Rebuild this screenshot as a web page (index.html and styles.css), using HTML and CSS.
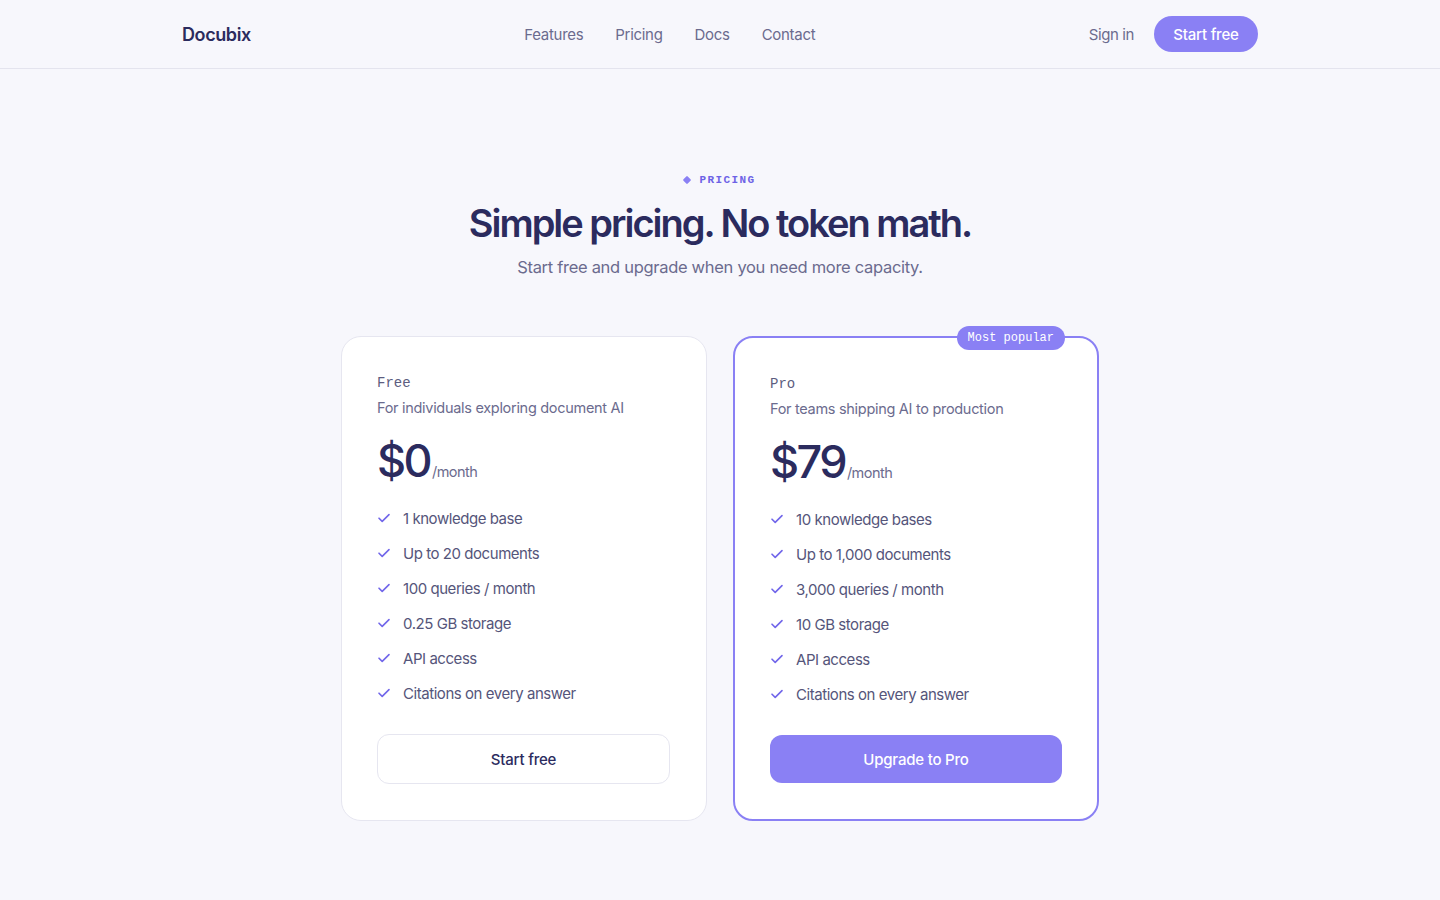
FILE: index.html
```html
<!DOCTYPE html>
<html lang="en">
<head>
<meta charset="utf-8">
<title>Docubix — Pricing</title>
<link rel="stylesheet" href="styles.css">
</head>
<body>
<header class="topbar">
  <div class="topbar-inner">
    <a class="logo" href="#">Docubix</a>
    <nav class="nav">
      <a href="#">Features</a>
      <a href="#">Pricing</a>
      <a href="#">Docs</a>
      <a href="#">Contact</a>
    </nav>
    <div class="actions">
      <a class="signin" href="#">Sign in</a>
      <a class="btn-pill" href="#">Start free</a>
    </div>
  </div>
</header>

<main class="pricing">
  <div class="eyebrow"><span class="diamond"></span>PRICING</div>
  <h1 class="title">Simple pricing. No token math.</h1>
  <p class="subtitle">Start free and upgrade when you need more capacity.</p>

  <div class="plans">
    <section class="card">
      <div class="plan-name">Free</div>
      <div class="plan-desc">For individuals exploring document AI</div>
      <div class="price"><span class="amount">$0</span><span class="per">/month</span></div>
      <ul class="features">
        <li><svg viewBox="0 0 14 14"><path d="M2 7.2l3.2 3.2L12 3.6"/></svg>1 knowledge base</li>
        <li><svg viewBox="0 0 14 14"><path d="M2 7.2l3.2 3.2L12 3.6"/></svg>Up to 20 documents</li>
        <li><svg viewBox="0 0 14 14"><path d="M2 7.2l3.2 3.2L12 3.6"/></svg>100 queries / month</li>
        <li><svg viewBox="0 0 14 14"><path d="M2 7.2l3.2 3.2L12 3.6"/></svg>0.25 GB storage</li>
        <li><svg viewBox="0 0 14 14"><path d="M2 7.2l3.2 3.2L12 3.6"/></svg>API access</li>
        <li><svg viewBox="0 0 14 14"><path d="M2 7.2l3.2 3.2L12 3.6"/></svg>Citations on every answer</li>
      </ul>
      <a class="btn-outline" href="#">Start free</a>
    </section>

    <section class="card card-pro">
      <span class="badge">Most popular</span>
      <div class="plan-name">Pro</div>
      <div class="plan-desc">For teams shipping AI to production</div>
      <div class="price"><span class="amount">$79</span><span class="per">/month</span></div>
      <ul class="features">
        <li><svg viewBox="0 0 14 14"><path d="M2 7.2l3.2 3.2L12 3.6"/></svg>10 knowledge bases</li>
        <li><svg viewBox="0 0 14 14"><path d="M2 7.2l3.2 3.2L12 3.6"/></svg>Up to 1,000 documents</li>
        <li><svg viewBox="0 0 14 14"><path d="M2 7.2l3.2 3.2L12 3.6"/></svg>3,000 queries / month</li>
        <li><svg viewBox="0 0 14 14"><path d="M2 7.2l3.2 3.2L12 3.6"/></svg>10 GB storage</li>
        <li><svg viewBox="0 0 14 14"><path d="M2 7.2l3.2 3.2L12 3.6"/></svg>API access</li>
        <li><svg viewBox="0 0 14 14"><path d="M2 7.2l3.2 3.2L12 3.6"/></svg>Citations on every answer</li>
      </ul>
      <a class="btn-solid" href="#">Upgrade to Pro</a>
    </section>
  </div>
</main>
</body>
</html>
```

FILE: styles.css
```css
* { box-sizing: border-box; }

html, body {
  margin: 0;
  padding: 0;
}

body {
  background: #f7f7fc;
  font-family: Inter, "Noto Sans", sans-serif;
  color: #2b2b5e;
  -webkit-font-smoothing: antialiased;
}

a { text-decoration: none; color: inherit; }

/* Header */
.topbar {
  height: 69px;
  border-bottom: 1px solid #e4e4ee;
}

.topbar-inner {
  width: 1076px;
  margin: 0 auto;
  height: 68px;
  display: flex;
  align-items: center;
  justify-content: space-between;
}

.logo {
  font-size: 18px;
  font-weight: 600;
  letter-spacing: -0.4px;
  color: #2b2b5e;
}

.nav {
  display: flex;
  gap: 32px;
  font-size: 15px;
  letter-spacing: -0.3px;
  color: #6b6b8e;
}

.actions {
  display: flex;
  align-items: center;
  gap: 20px;
}

.signin {
  font-size: 15px;
  color: #6b6b8e;
  letter-spacing: -0.4px;
}

.btn-pill {
  display: inline-flex;
  align-items: center;
  justify-content: center;
  height: 36px;
  width: 104px;
  border-radius: 18px;
  background: #8a80f4;
  color: #ffffff;
  font-size: 15px;
  font-weight: 500;
  letter-spacing: -0.2px;
}

/* Hero */
.pricing {
  padding-top: 104px;
  display: flex;
  flex-direction: column;
  align-items: center;
}

.eyebrow {
  display: flex;
  align-items: center;
  gap: 9px;
  font-family: "Liberation Mono", "DejaVu Sans Mono", monospace;
  font-size: 11px;
  font-weight: 700;
  letter-spacing: 1.4px;
  color: #6d62e6;
  height: 14px;
  line-height: 14px;
}

.diamond {
  width: 6px;
  height: 6px;
  background: #8a80f4;
  transform: rotate(45deg);
  border-radius: 1px;
}

.title {
  margin: 10px 0 0;
  font-size: 38px;
  line-height: 52px;
  font-weight: 600;
  letter-spacing: -2px;
  color: #2b2b5e;
}

.subtitle {
  margin: 6px 0 0;
  font-size: 16.5px;
  line-height: 24px;
  color: #6b6b8e;
  letter-spacing: -0.3px;
}

/* Cards */
.plans {
  margin-top: 57px;
  display: flex;
  gap: 26px;
}

.card {
  position: relative;
  width: 366px;
  background: #ffffff;
  border: 1px solid #e6e6f0;
  border-radius: 20px;
  padding: 37px 36px 36px 35px;
  display: flex;
  flex-direction: column;
}

.card-pro {
  border: 2px solid #8a80f4;
  padding: 37px 35px 36px;
}

.badge {
  position: absolute;
  top: -12px;
  right: 32px;
  height: 24px;
  padding: 0 11px;
  display: inline-flex;
  align-items: center;
  border-radius: 12px;
  background: #8a80f4;
  color: #ffffff;
  font-family: "Liberation Mono", "DejaVu Sans Mono", monospace;
  font-size: 12px;
}

.plan-name {
  font-family: "Liberation Mono", "DejaVu Sans Mono", monospace;
  font-size: 14px;
  line-height: 18px;
  color: #5d5d80;
}

.plan-desc {
  margin-top: 6px;
  font-size: 14.5px;
  line-height: 20px;
  color: #6b6b8e;
  letter-spacing: -0.3px;
}

.price {
  margin-top: 17px;
  display: flex;
  align-items: baseline;
}

.amount {
  font-size: 45px;
  line-height: 52px;
  font-weight: 500;
  letter-spacing: -2.6px;
  color: #2b2b5e;
}

.per {
  margin-left: 2px;
  font-size: 14.5px;
  color: #6b6b8e;
  letter-spacing: -0.5px;
}

.features {
  list-style: none;
  margin: 20px 0 0;
  padding: 0;
  display: flex;
  flex-direction: column;
  gap: 13px;
}

.features li {
  display: flex;
  align-items: center;
  gap: 12px;
  height: 22px;
  font-size: 15px;
  color: #55557a;
  letter-spacing: -0.45px;
}

.features svg {
  width: 14px;
  height: 14px;
  flex: none;
  fill: none;
  stroke: #7166ea;
  stroke-width: 1.6;
  stroke-linecap: round;
  stroke-linejoin: round;
}

.btn-outline {
  margin-top: 30px;
  display: flex;
  align-items: center;
  justify-content: center;
  height: 50px;
  border: 1px solid #e6e6f0;
  border-radius: 12px;
  font-size: 15px;
  font-weight: 500;
  color: #2b2b5e;
  letter-spacing: -0.2px;
}

.btn-solid {
  margin-top: 30px;
  display: flex;
  align-items: center;
  justify-content: center;
  height: 48px;
  border-radius: 12px;
  background: #8a80f4;
  color: #ffffff;
  font-size: 15px;
  font-weight: 500;
  letter-spacing: -0.2px;
}
```
